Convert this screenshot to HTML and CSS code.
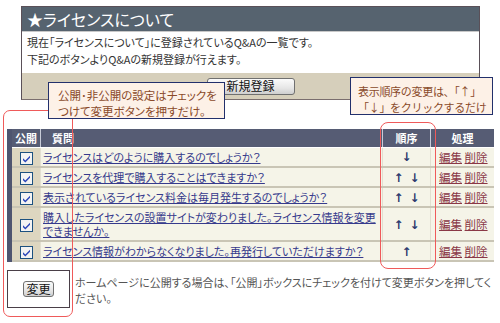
FILE: index.html
```html
<!DOCTYPE html>
<html lang="ja">
<head>
<meta charset="utf-8">
<link rel="stylesheet" href="styles.css">
</head>
<body>
<div class="page">
  <section class="panel">
    <h1 class="panel-title">★ライセンスについて</h1>
    <div class="panel-body">
      <p>現在「ライセンスについて」に登録されているQ&amp;Aの一覧です。</p>
      <p>下記のボタンよりQ&amp;Aの新規登録が行えます。</p>
    </div>
    <div class="panel-foot">
      <button class="btn btn-new">新規登録</button>
    </div>
  </section>

  <table class="qa">
    <thead>
      <tr>
        <th class="c-pub">公開</th>
        <th class="c-q">質問</th>
        <th class="c-ord">順序</th>
        <th class="c-act">処理</th>
      </tr>
    </thead>
    <tbody>
      <tr>
        <td class="c-pub"><span class="chk"><svg viewBox="0 0 13 13" width="13" height="13"><rect x="0.5" y="0.5" width="12" height="12" fill="#f3f3f3" stroke="#1c5180"/><path d="M3 6.2 L5.3 8.6 L10 3.8 L10 5.8 L5.3 10.6 L3 8.2 Z" fill="#2a44b8"/></svg></span></td>
        <td class="c-q"><a href="#">ライセンスはどのように購入するのでしょうか？</a></td>
        <td class="c-ord"><span class="ar">↓</span></td>
        <td class="c-act"><a href="#">編集</a> <a href="#">削除</a></td>
      </tr>
      <tr>
        <td class="c-pub"><span class="chk"><svg viewBox="0 0 13 13" width="13" height="13"><rect x="0.5" y="0.5" width="12" height="12" fill="#f3f3f3" stroke="#1c5180"/><path d="M3 6.2 L5.3 8.6 L10 3.8 L10 5.8 L5.3 10.6 L3 8.2 Z" fill="#2a44b8"/></svg></span></td>
        <td class="c-q"><a href="#">ライセンスを代理で購入することはできますか？</a></td>
        <td class="c-ord"><span class="ar">↑</span><span class="ar">↓</span></td>
        <td class="c-act"><a href="#">編集</a> <a href="#">削除</a></td>
      </tr>
      <tr>
        <td class="c-pub"><span class="chk"><svg viewBox="0 0 13 13" width="13" height="13"><rect x="0.5" y="0.5" width="12" height="12" fill="#f3f3f3" stroke="#1c5180"/><path d="M3 6.2 L5.3 8.6 L10 3.8 L10 5.8 L5.3 10.6 L3 8.2 Z" fill="#2a44b8"/></svg></span></td>
        <td class="c-q"><a href="#">表示されているライセンス料金は毎月発生するのでしょうか？</a></td>
        <td class="c-ord"><span class="ar">↑</span><span class="ar">↓</span></td>
        <td class="c-act"><a href="#">編集</a> <a href="#">削除</a></td>
      </tr>
      <tr>
        <td class="c-pub"><span class="chk"><svg viewBox="0 0 13 13" width="13" height="13"><rect x="0.5" y="0.5" width="12" height="12" fill="#f3f3f3" stroke="#1c5180"/><path d="M3 6.2 L5.3 8.6 L10 3.8 L10 5.8 L5.3 10.6 L3 8.2 Z" fill="#2a44b8"/></svg></span></td>
        <td class="c-q"><a href="#">購入したライセンスの設置サイトが変わりました。ライセンス情報を変更できませんか。</a></td>
        <td class="c-ord"><span class="ar">↑</span><span class="ar">↓</span></td>
        <td class="c-act"><a href="#">編集</a> <a href="#">削除</a></td>
      </tr>
      <tr>
        <td class="c-pub"><span class="chk"><svg viewBox="0 0 13 13" width="13" height="13"><rect x="0.5" y="0.5" width="12" height="12" fill="#f3f3f3" stroke="#1c5180"/><path d="M3 6.2 L5.3 8.6 L10 3.8 L10 5.8 L5.3 10.6 L3 8.2 Z" fill="#2a44b8"/></svg></span></td>
        <td class="c-q"><a href="#">ライセンス情報がわからなくなりました。再発行していただけますか？</a></td>
        <td class="c-ord"><span class="ar">↑</span></td>
        <td class="c-act"><a href="#">編集</a> <a href="#">削除</a></td>
      </tr>
    </tbody>
  </table>

  <div class="foot">
    <div class="foot-box"><button class="btn btn-change">変更</button></div>
    <p class="foot-text">ホームページに公開する場合は、「公開」ボックスにチェックを付けて変更ボタンを押してください。</p>
  </div>

  <div class="ring ring-pub"></div>
  <div class="ring ring-ord"></div>

  <div class="note note-pub">公開･非公開の設定はチェックを<br>つけて変更ボタンを押すだけ。</div>
  <div class="note note-ord">表示順序の変更は、「↑」<br>「↓」をクリックするだけ</div>
</div>
</body>
</html>
```

FILE: styles.css
```css
* { box-sizing: border-box; }
html, body { margin: 0; padding: 0; background: #fff; }
body {
  font-family: "Noto Sans CJK JP", "Noto Sans", sans-serif;
  font-feature-settings: "palt";
  font-size: 11px;
  color: #333;
  width: 500px;
  height: 323px;
  overflow: hidden;
}
.page { position: relative; width: 500px; height: 323px; padding-top: 6px; }
p { margin: 0; }

.panel {
  margin-left: 21px;
  width: 459px;
  border: 1px solid #5a5058;
  border-bottom-color: #7a6e6e;
}
.panel-title {
  margin: 0;
  height: 25px;
  background: #56636f;
  color: #fff;
  font-size: 16px;
  font-weight: normal;
  line-height: 25px;
  padding-left: 5px;
  border-bottom: 1px solid #c8c8c8;
}
.panel-body {
  background: #fff;
  padding: 2px 6px 5px 5px;
  line-height: 17px;
  color: #333;
}
.panel-foot {
  background: #d6cfbb;
  height: 26px;
  display: flex;
  justify-content: center;
  align-items: center;
}
.btn {
  font-family: inherit;
  font-feature-settings: "palt";
  font-size: 12px;
  color: #111;
  background: linear-gradient(#fbfbfb, #e6e6e6 60%, #cfcfcf);
  border: 1px solid #707070;
  border-radius: 3px;
  padding: 0;
  line-height: 14px;
}
.btn-new { width: 88px; height: 17px; }

.qa {
  margin: 29px 0 0 7px;
  width: 487px;
  border-collapse: collapse;
  border-left: 5px solid #4f5570;
}
.qa th {
  background: #565c74;
  color: #fff;
  font-weight: bold;
  height: 18px;
  padding: 0;
  font-size: 11px;
  border-right: 1px solid #c8ccd8;
  border-bottom: 1px solid #fff;
}
.qa th:last-child { border-right: none; }
.qa th.c-q { text-align: left; padding-left: 11px; }
.qa td {
  background: #f5f4e8;
  height: 20px;
  padding: 0;
  border-bottom: 2px solid #c9c5b5;
  border-right: 1px solid #e2dfd0;
  line-height: 14px;
}
.qa td:last-child { border-right: none; }
.qa td.c-pub { background: #ddd6c0; width: 31px; text-align: center; }
.qa td.c-q { padding: 2px 0 2px 2px; width: 342px; }
.qa td.c-ord { width: 48px; text-align: center; }
.qa td.c-act { padding-left: 8px; font-size: 11.5px; }
.chk { display: inline-block; width: 13px; height: 13px; vertical-align: middle; }
.chk svg { display: block; }
.qa td.c-q a { color: #363a8c; text-decoration: underline; }
.qa td.c-act a { color: #8a3846; text-decoration: underline; }
.ar { color: #2d3a6e; font-weight: bold; font-size: 12px; margin: 0 3px; font-family: "DejaVu Sans", sans-serif; }

.foot {
  display: flex;
  align-items: flex-start;
  margin: 8px 0 0 7px;
}
.foot-box {
  width: 63px;
  height: 38px;
  border: 1px solid #4a3f48;
  background: #fff;
  display: flex;
  align-items: center;
  justify-content: center;
  flex: none;
}
.btn-change { width: 31px; height: 16px; }
.foot-text {
  margin: 4px 4px 0 5px;
  line-height: 16px;
  color: #555;
}

.ring {
  position: absolute;
  border: 1.5px solid #ef5a5a;
}
.ring-pub { left: 3px; top: 110px; width: 70px; height: 207px; border-radius: 7px; }
.ring-ord { left: 380px; top: 122px; width: 56px; height: 147px; border-radius: 8px; }

.note {
  position: absolute;
  background: #fdf1e7;
  border: 1px solid #22306c;
  color: #8a4a2a;
  line-height: 16px;
  font-size: 11.5px;
}
.note-pub { left: 48px; top: 82px; width: 177px; height: 37px; padding: 4px 0 0 9px; }
.note-ord {
  left: 350px; top: 77px; width: 143px; height: 38px; padding: 5px 0 0 7px;
  font-size: 11px;
  letter-spacing: -0.3px;
  font-feature-settings: normal;
  white-space: nowrap;
}
```
